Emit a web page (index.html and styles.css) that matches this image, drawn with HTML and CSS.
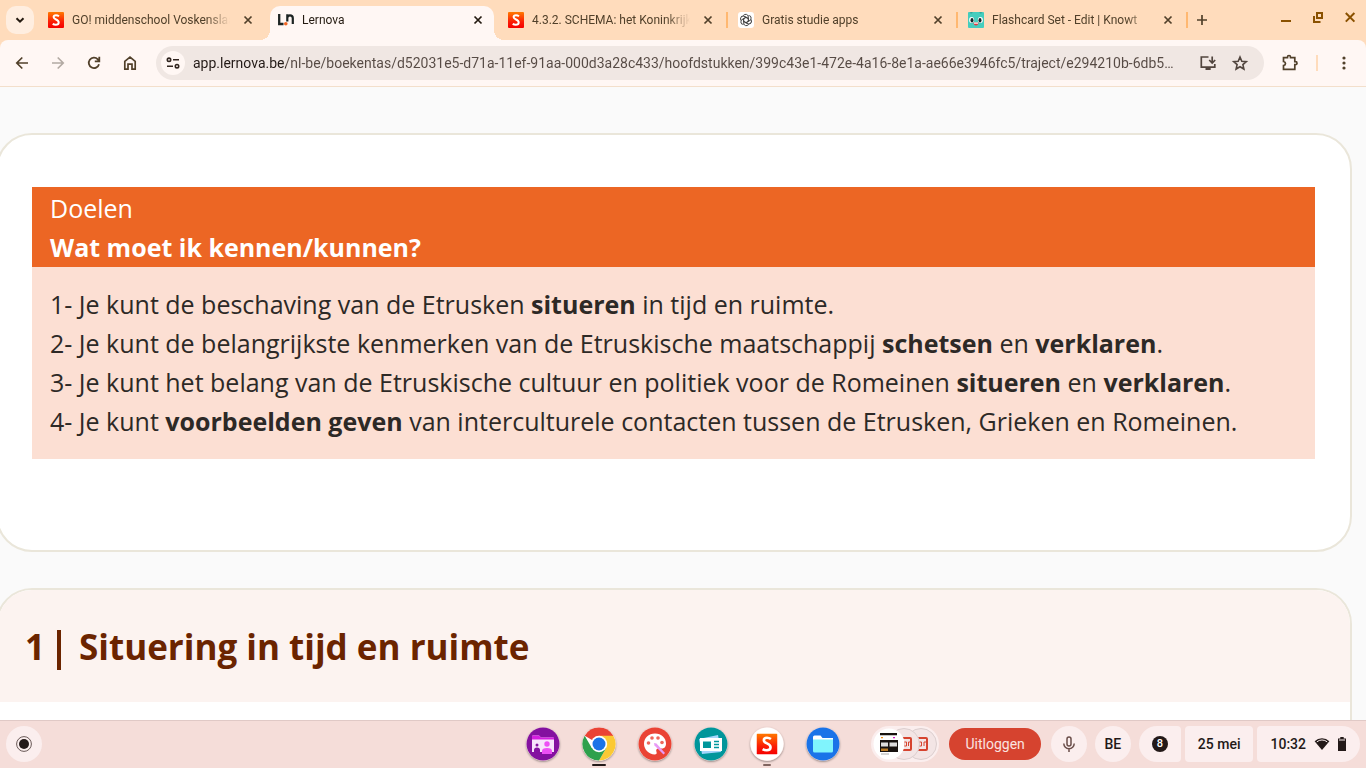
FILE: index.html
```html
<!DOCTYPE html>
<html lang="nl-BE">
<head>
  <meta charset="UTF-8">
  <title>Lernova</title>
  <meta name="viewport" content="width=device-width, initial-scale=1.0">
  <link rel="stylesheet" href="styles.css">
</head>
<body>
  <header class="browser">
    <!-- tabs -->
    <div class="tab-strip">
      <button class="tab-search" aria-label="Tabbladen zoeken">
        <svg width="16" height="16" viewBox="0 0 16 16"><path d="M4.5 6.2 8 9.7l3.5-3.5" fill="none" stroke="#241a10" stroke-width="2"/></svg>
      </button>
      <nav class="tabs">
        <div class="tab">
          <svg class="favicon" viewBox="0 0 16 16"><use href="#smartschool"/></svg>
          <a href="#" class="tab-title">GO! middenschool Voskenslaan</a>
          <button class="tab-close" aria-label="Sluiten"><svg viewBox="0 0 16 16"><use href="#cross"/></svg></button>
        </div>
        <div class="tab active">
          <svg class="favicon" viewBox="0 0 16 16"><path d="M1.2 2v10h4.300" fill="none" stroke="#1d2423" stroke-width="2.300"/><path d="M9.300 9.500V2.200M9.300 7V6q0-2.600 2.700-2.600T14.800 6v6" fill="none" stroke="#1d2423" stroke-width="2.200"/><circle cx="7.800" cy="11.800" r="1.800" fill="#f26522"/></svg>
          <a href="#" class="tab-title">Lernova</a>
          <button class="tab-close" aria-label="Sluiten"><svg viewBox="0 0 16 16"><use href="#cross"/></svg></button>
        </div>
        <div class="tab separated">
          <svg class="favicon" viewBox="0 0 16 16"><use href="#smartschool"/></svg>
          <a href="#" class="tab-title">4.3.2. SCHEMA: het Koninkrijk</a>
          <button class="tab-close" aria-label="Sluiten"><svg viewBox="0 0 16 16"><use href="#cross"/></svg></button>
        </div>
        <div class="tab separated">
          <svg class="favicon" viewBox="0 0 16 16">
            <rect width="16" height="16" rx="3" fill="#fff"/>
            <g fill="none" stroke="#444" stroke-width="1">
              <path id="petal" d="M8 5.300 5.600 6.700v4.100q0 2 1.900 2.800 2 .5 3.300-1.200"/>
              <use href="#petal" transform="rotate(60 8 8)"/>
              <use href="#petal" transform="rotate(120 8 8)"/>
              <use href="#petal" transform="rotate(180 8 8)"/>
              <use href="#petal" transform="rotate(240 8 8)"/>
              <use href="#petal" transform="rotate(300 8 8)"/>
            </g>
          </svg>
          <a href="#" class="tab-title">Gratis studie apps</a>
          <button class="tab-close" aria-label="Sluiten"><svg viewBox="0 0 16 16"><use href="#cross"/></svg></button>
        </div>
        <div class="tab separated">
          <svg class="favicon" viewBox="0 0 16 16">
            <rect width="16" height="16" rx="1" fill="#45cdbd"/>
            <path d="M2 0h3L3 2zM11 0h3l-1 2z" fill="#2fa99b"/>
            <ellipse cx="3.600" cy="8" rx="2.500" ry="3" fill="#fff"/><ellipse cx="12.400" cy="8" rx="2.500" ry="3" fill="#fff"/>
            <ellipse cx="4" cy="8.200" rx="1.500" ry="2.200" fill="#14292b"/><ellipse cx="12" cy="8.200" rx="1.500" ry="2.200" fill="#14292b"/>
            <path d="M5.500 10.500h5q-.3 3-2.500 3t-2.500-3z" fill="#e5373d"/><path d="M6 10.500h4v1.200H6z" fill="#fff"/>
          </svg>
          <a href="#" class="tab-title">Flashcard Set - Edit | Knowt</a>
          <button class="tab-close" aria-label="Sluiten"><svg viewBox="0 0 16 16"><use href="#cross"/></svg></button>
        </div>
      </nav>
      <button class="new-tab" aria-label="Nieuw tabblad">
        <svg width="16" height="16" viewBox="0 0 16 16"><path d="M8 3v10M3 8h10" stroke="#51402a" stroke-width="1.700"/></svg>
      </button>
      <div class="window-controls">
        <button aria-label="Minimaliseren"><svg viewBox="0 0 16 16"><path d="M3 11h10" stroke="#8a5100" stroke-width="2"/></svg></button>
        <button aria-label="Herstellen"><svg viewBox="0 0 16 16"><path d="M7 3h5v5H7zM4 6v6h6.500" fill="none" stroke="#8a5100" stroke-width="2"/></svg></button>
        <button aria-label="Venster sluiten"><svg viewBox="0 0 16 16"><path d="m3.800 3 8.600 8.600m0-8.600-8.600 8.600" stroke="#8a5100" stroke-width="2"/></svg></button>
      </div>
    </div>

    <!-- address bar -->
    <div class="toolbar">
      <button class="tool" aria-label="Vorige"><svg viewBox="0 0 20 20"><path d="M16 10H5m5.300-5.500L4.800 10l5.500 5.500" fill="none" stroke="#51402a" stroke-width="1.700"/></svg></button>
      <button class="tool" aria-label="Volgende" disabled><svg viewBox="0 0 20 20"><path d="M4 10h11M9.700 4.500l5.500 5.500-5.500 5.500" fill="none" stroke="#b3aaa3" stroke-width="1.700"/></svg></button>
      <button class="tool" aria-label="Vernieuwen"><svg viewBox="0 0 20 20"><path d="M15 11.200A5.200 5.200 0 1 1 13.800 6.300L15 7.600M15.300 3.800v4.500h-4.500" fill="none" stroke="#51402a" stroke-width="1.800"/></svg></button>
      <button class="tool" aria-label="Startpagina"><svg viewBox="0 0 20 20"><path d="M4.800 16.200V8.300L10 4.200l5.200 4.100v7.900H12v-5H8v5z" fill="none" stroke="#51402a" stroke-width="1.700"/></svg></button>
      <div class="address">
        <button class="site-info" aria-label="Sitegegevens">
          <svg width="16" height="16" viewBox="0 0 16 16"><g fill="none" stroke="#30251f" stroke-width="1.600"><circle cx="4" cy="4.800" r="1.700"/><path d="M8 4.800h6M2 11.200h6"/><circle cx="12" cy="11.200" r="1.700"/></g></svg>
        </button>
        <input class="url" type="text" aria-label="Adresbalk" value="app.lernova.be/nl-be/boekentas/d52031e5-d71a-11ef-91aa-000d3a28c433/hoofdstukken/399c43e1-472e-4a16-8e1a-ae66e3946fc5/traject/e294210b-6db5…">
        <button class="tool small" aria-label="App installeren"><svg viewBox="0 0 20 20"><path d="M10.500 4H3.300v10.200h13.500V11" fill="none" stroke="#51453e" stroke-width="1.700"/><path d="M7.500 14.500h5.200v2.500H7.500z" fill="#51453e"/><path d="M14.200 3.500v6m-3-2.500 3 3 3-3" fill="none" stroke="#51453e" stroke-width="1.700"/></svg></button>
        <button class="tool small" aria-label="Bladwijzer"><svg viewBox="0 0 20 20"><path d="m10 4 1.800 4.200 4.500.4-3.400 3 1 4.400-3.900-2.300L6.100 16l1-4.400-3.400-3 4.500-.4z" fill="none" stroke="#51453e" stroke-width="1.600"/></svg></button>
      </div>
      <button class="tool extensions" aria-label="Extensies"><svg viewBox="0 0 20 20"><path d="M3.500 4.700h4V4a1.500 1.500 0 0 1 3 0v.7h4.300v4h.7a1.500 1.500 0 0 1 0 3h-.7v4.600H3.500v-3.800q2-.3 2-2t-2-2z" fill="none" stroke="#51402a" stroke-width="1.700"/></svg></button>
      <span class="divider"></span>
      <button class="tool menu" aria-label="Menu"><svg viewBox="0 0 20 20"><g fill="#51402a"><circle cx="10" cy="5" r="1.600"/><circle cx="10" cy="10" r="1.600"/><circle cx="10" cy="15" r="1.600"/></g></svg></button>
    </div>
  </header>

  <!-- page -->
  <main class="page">
    <section class="card goals-card">
      <div class="goals">
        <div class="goals-header">
          <p>Doelen</p>
          <h2>Wat moet ik kennen/kunnen?</h2>
        </div>
        <div class="goals-list">
          <p>1- Je kunt de beschaving van de Etrusken <b>situeren</b> in tijd en ruimte.</p>
          <p>2- Je kunt de belangrijkste kenmerken van de Etruskische maatschappij <b>schetsen</b> en <b>verklaren</b>.</p>
          <p>3- Je kunt het belang van de Etruskische cultuur en politiek voor de Romeinen <b>situeren</b> en <b>verklaren</b>.</p>
          <p>4- Je kunt <b>voorbeelden geven</b> van interculturele contacten tussen de Etrusken, Grieken en Romeinen.</p>
        </div>
      </div>
    </section>
    <section class="card chapter">
      <h1><span>1</span><span class="bar"></span><span>Situering in tijd en ruimte</span></h1>
    </section>
  </main>

  <!-- shelf -->
  <footer class="shelf">
    <div class="shelf-start">
      <button class="round" aria-label="Launcher"><svg width="18" height="18" viewBox="0 0 18 18"><circle cx="9" cy="9" r="7.400" fill="none" stroke="#6a5a58" stroke-width="1"/><circle cx="9" cy="9" r="5" fill="#231918"/></svg></button>
    </div>
    <nav class="apps">
      <button class="app" aria-label="Scherm delen">
        <svg viewBox="0 0 34 34"><circle cx="17" cy="17" r="16.500" fill="#8411a0"/><path d="M6 9.500q0-1 1-1h6l2 2h12q1 0 1 1V25H6z" fill="#f7e3fb"/><path d="M6 9.500q0-1 1-1h6l2 2H28v2H6z" fill="#d51fe0"/><circle cx="11" cy="18" r="1.500" fill="#8411a0"/><path d="M8 25v-2q0-2.500 3-2.500t3 2.500v2z" fill="#8411a0"/><circle cx="21" cy="17" r="2.700" fill="#ed50f5"/><path d="M16 27v-3q0-3 5-3t5 3v3z" fill="#ed50f5"/></svg>
      </button>
      <button class="app" aria-label="Chrome">
        <svg viewBox="0 0 34 34"><circle cx="17" cy="17" r="16.500" fill="#fff"/><path d="M17 17 2.700 8.700A16.500 16.500 0 0 1 31.300 8.700z" fill="#ea4335"/><path d="M17 8.700h14.300A16.500 16.500 0 0 1 17 33.500l7.200-12.400z" fill="#fbc934"/><path d="M9.800 21.100 2.700 8.700A16.500 16.500 0 0 0 17 33.500l7.200-12.400z" fill="#2da04c"/><circle cx="17" cy="17" r="8.200" fill="#fff"/><circle cx="17" cy="17" r="6.500" fill="#1a73e8"/></svg>
      </button>
      <button class="app" aria-label="Canvas">
        <svg viewBox="0 0 34 34"><circle cx="17" cy="17" r="16.500" fill="#ea4335"/><path d="M17 6.500c-6.500 0-11 4.500-11 10.300S11 27.500 16.500 27.500c2 0 2.600-1.200 2-2.500-.8-2 0-3.500 2-3.500H24c2.800 0 4-2.200 4-5 0-5.500-4.500-10-11-10z" fill="#fff"/><g fill="#ee675c"><circle cx="10.500" cy="16" r="1.800"/><circle cx="14" cy="11" r="1.800"/><circle cx="20" cy="11" r="1.800"/><circle cx="24" cy="15.500" r="1.800"/></g><path d="m16 16 2.500.5L27 26l-1.500 1.500-9-9z" fill="#e79af5"/></svg>
      </button>
      <button class="app" aria-label="Nieuws">
        <svg viewBox="0 0 34 34"><circle cx="17" cy="17" r="16.500" fill="#00969b"/><path d="m5 12 19-4 3 17-19 2z" fill="#a4d5fb"/><path d="M6 11h22v13H6z" fill="#fff"/><path d="M9 14.500h8v6.500H9z" fill="#00969b"/><path d="M20 14.500h5M20 17.500h5M20 20.500h5" stroke="#00969b" stroke-width="1.600"/></svg>
      </button>
      <button class="app" aria-label="Smartschool">
        <svg viewBox="0 0 34 34"><circle cx="17" cy="17" r="16.500" fill="#fff"/><use href="#smartschool" x="6.500" y="6.500" width="21" height="21"/></svg>
      </button>
      <button class="app" aria-label="Bestanden">
        <svg viewBox="0 0 34 34"><circle cx="17" cy="17" r="16.500" fill="#1a73e8"/><path d="M7 10q0-1.500 1.500-1.500h6l2 2.500H27v5H7z" fill="#fff"/><path d="M7 12.500h20V24q0 1.500-1.500 1.500h-17Q7 25.500 7 24z" fill="#80f4fd"/></svg>
      </button>
    </nav>
    <div class="shelf-end">
      <button class="holding" aria-label="Tote">
        <svg width="68" height="36" viewBox="0 0 68 36">
          <circle cx="50" cy="18" r="15.500" fill="#f3e5e5" stroke="#dccfcf"/>
          <rect x="46" y="12" width="10" height="12" rx="1" fill="none" stroke="#d6432f" stroke-width="2"/><path d="M48 16h2.500v4H48zm5 4v-4h2" fill="none" stroke="#d6432f" stroke-width="1"/>
          <circle cx="33" cy="18" r="15.500" fill="#f3e5e5" stroke="#dccfcf"/>
          <rect x="30" y="12" width="10" height="12" rx="1" fill="none" stroke="#d6432f" stroke-width="2"/><path d="M33 16h2.500v4H33zm4.500 4v-4h2" fill="none" stroke="#d6432f" stroke-width="1"/>
          <circle cx="18" cy="18" r="15.500" fill="#fff"/>
          <path d="M9 7h17v2.200H9zM9 14h18v12H9z" fill="#17120f"/><path d="M10 16.500h7v4h-7zm8.500 0h7.500v4h-7.500z" fill="#ddd"/><path d="M10 22.500h7v2.500h-7z" fill="#b97a24"/><path d="M10 11h2v1.200h-2z" fill="#f3941c"/><path d="M22 11h2v1.200h-2z" fill="#d718c8"/><path d="M10 28h8" stroke="#aaa"/>
        </svg>
      </button>
      <button class="logout">Uitloggen</button>
      <button class="round" aria-label="Dicteren"><svg width="20" height="20" viewBox="0 0 20 20"><path d="M10 3a2 2 0 0 1 2 2v5a2 2 0 0 1-4 0V5a2 2 0 0 1 2-2zM4.800 9.500a5.200 5.200 0 0 0 10.400 0M10 15v3" fill="none" stroke="#6a4d49" stroke-width="1.500"/></svg></button>
      <button class="round">BE</button>
      <div class="status">
        <button class="notifications"><span class="count">8</span></button>
        <button class="date">25 mei</button>
        <button class="clock">
          10:32
          <svg width="16" height="16" viewBox="0 0 16 16"><path d="M.6 5.300a10.500 10.500 0 0 1 14.800 0L8 14z" fill="#231918"/><path d="M2.800 5.900a8 8 0 0 1 10.400 0" fill="none" stroke="#fbeeee" stroke-width="1"/></svg>
          <svg width="8" height="16" viewBox="0 0 8 16"><path d="M2.300 1h3.400v1.500H8V15H0V2.500h2.300z" fill="#231918"/><path d="M1 3.500h6v1H1z" fill="#fbeeee"/></svg>
        </button>
      </div>
    </div>
  </footer>

  <!-- shared icons -->
  <svg class="defs" aria-hidden="true">
    <linearGradient id="ember" x1="0" y1="0" x2="0" y2="1"><stop offset="0" stop-color="#ff7a00"/><stop offset=".6" stop-color="#fb1e05"/><stop offset="1" stop-color="#f50000"/></linearGradient>
    <symbol id="smartschool" viewBox="0 0 16 16"><rect width="16" height="16" rx="1" fill="url(#ember)"/><path d="M11 4.200Q9.600 3.200 8 3.200 5.600 3.200 5.600 5.100 5.600 6.500 8 7.500 10.700 8.600 10.700 10.500 10.700 12.800 7.800 12.800 6 12.800 4.700 11.900" fill="none" stroke="#fff" stroke-width="2"/></symbol>
    <symbol id="cross" viewBox="0 0 16 16"><path d="m4.500 4.500 7 7m0-7-7 7" stroke="currentColor" stroke-width="1.700"/></symbol>
  </svg>
</body>
</html>
```
FILE: styles.css
```css
* {
  box-sizing: border-box;
}

body {
  display: flex;
  flex-direction: column;
  height: 100vh;
  margin: 0;
  overflow: hidden;
  background: #fafafa;
  font-family: Roboto, sans-serif;
}

button {
  display: flex;
  align-items: center;
  justify-content: center;
  padding: 0;
  border: none;
  background: none;
  font: inherit;
  color: inherit;
}

svg {
  display: block;
  flex: none;
}

h1, h2, p {
  margin: 0;
}

.defs {
  position: absolute;
  width: 0;
  height: 0;
}

/* tab strip */
.browser {
  background: #ffdcbc;
}

.tab-strip {
  display: flex;
  height: 40px;
  padding-left: 6px;
}

.tab-search {
  width: 28px;
  height: 28px;
  margin: 6px 4px 0 0;
  border-radius: 10px;
  background: #ffeee0;
}

.tabs {
  display: flex;
  flex: 1 1 0;
  max-width: 1150px;
}

.tab {
  position: relative;
  display: flex;
  flex: 1 1 0;
  align-items: center;
  min-width: 0;
  padding: 0 12px 0 10px;
  color: #51402a;
  font-size: 12px;
}

.separated::after {
  content: "";
  position: absolute;
  top: 12px;
  right: 0;
  width: 2px;
  height: 16px;
  background: #ffb871;
}

.active {
  margin: 6px 4px 0 2px;
  padding: 0 8px 6px;
  border-radius: 10px 10px 0 0;
  background: #fff7f4;
  color: #231a10;
}

.active::before,
.active::after {
  content: "";
  position: absolute;
  bottom: 0;
  width: 10px;
  height: 10px;
}

.active::before {
  right: 100%;
  background: radial-gradient(circle at 0 0, transparent 10px, #fff7f4 10px);
}

.active::after {
  left: 100%;
  background: radial-gradient(circle at 100% 0, transparent 10px, #fff7f4 10px);
}

.favicon {
  width: 16px;
  height: 16px;
}

.tab-title {
  flex: 1;
  margin: 0 10px 0 8px;
  overflow: hidden;
  color: inherit;
  line-height: 16px;
  text-decoration: none;
  white-space: nowrap;
  -webkit-mask-image: linear-gradient(to left, transparent, #000 24px);
  mask-image: linear-gradient(to left, transparent, #000 24px);
}

.tab-close,
.tab-close svg {
  width: 16px;
  height: 16px;
}

.new-tab {
  width: 28px;
}

.window-controls {
  display: flex;
  gap: 16px;
  margin-left: auto;
  padding: 0 8px 4px 0;
}

.window-controls svg {
  width: 16px;
  height: 16px;
}

/* toolbar */
.toolbar {
  display: flex;
  align-items: center;
  height: 47px;
  padding: 0 8px;
  border-bottom: 1px solid #f3dfcb;
  border-radius: 8px 8px 0 0;
  background: #fff7f4;
}

.tool {
  flex: none;
  width: 28px;
  height: 28px;
  margin-right: 8px;
}

.tool svg {
  width: 20px;
  height: 20px;
}

.address {
  display: flex;
  flex: 1;
  align-items: center;
  height: 34px;
  margin: 0 12px 0 4px;
  padding: 0 10px 0 5px;
  border-radius: 17px;
  background: #f0e7e3;
}

.site-info {
  flex: none;
  width: 24px;
  height: 24px;
  border-radius: 50%;
  background: #fff7f4;
}

/* host part is darker than the path */
.url {
  flex: 1;
  min-width: 0;
  height: 24px;
  margin: 0 0 0 8px;
  padding: 0;
  border: none;
  outline: none;
  background: linear-gradient(to right, #231a16 93px, #564a44 93px);
  -webkit-background-clip: text;
  background-clip: text;
  color: transparent;
  font: 14px Roboto, sans-serif;
  text-overflow: ellipsis;
}

.small {
  margin: 0 0 0 4px;
}

.extensions {
  margin-right: 12px;
}

.divider {
  width: 2px;
  height: 16px;
  margin-right: 12px;
  background: #ffdcbc;
}

.menu {
  margin-right: 0;
}

/* page */
.page {
  flex: 1;
  min-height: 0;
  padding: 46px 14px 0 0;
  overflow: hidden;
  font-family: "Open Sans", "Noto Sans", sans-serif;
}

.card {
  margin: 0 0 36px -4px;
  border: 2px solid #eae6da;
  border-radius: 36px;
  background: #fff;
}

.goals-card {
  padding: 52px 35px 91px 34px;
}

.goals {
  background: #fcdfd3;
  font-size: 25px;
}

.goals-header {
  padding: 2px 18px 0;
  background: #ec6624;
  color: #fff;
  line-height: 39px;
}

.goals-header h2 {
  font-size: 25px;
}

.goals-list {
  padding: 18px;
  color: #2d2926;
  line-height: 39px;
  white-space: nowrap;
}

.chapter {
  height: 400px;
  overflow: hidden;
}

.chapter h1 {
  display: flex;
  align-items: center;
  height: 112px;
  padding: 0 27px;
  background: #fcf3f0;
  color: #6b2400;
  font-size: 35px;
}

.bar {
  width: 4px;
  height: 40px;
  margin: 8px 18px 0 12px;
  background: #6b2400;
}

/* shelf */
.shelf {
  display: grid;
  grid-template-columns: 1fr auto 1fr;
  align-items: center;
  height: 48px;
  padding: 0 6px;
  background: #f5ddd9;
  box-shadow: inset 0 1px #e0c9c6;
  color: #231918;
  font-size: 14px;
  font-weight: 500;
}

.apps {
  display: flex;
  gap: 22px;
}

.app {
  position: relative;
  width: 34px;
  height: 34px;
  border-radius: 50%;
  box-shadow: 0 1px 2px rgba(0, 0, 0, 0.35);
}

.app svg {
  width: 34px;
  height: 34px;
}

/* running apps */
.app:nth-child(2)::after,
.app:nth-child(5)::after {
  content: "";
  position: absolute;
  top: 37px;
  width: 14px;
  height: 2px;
  border-radius: 1px;
  background: #231918;
}

.app:nth-child(5)::after {
  width: 8px;
  background: #806560;
}

.shelf-end {
  display: flex;
  align-items: center;
  justify-content: flex-end;
  gap: 8px;
}

.round {
  width: 36px;
  height: 36px;
  border-radius: 50%;
  background: #fbeeee;
}

.holding {
  height: 36px;
  border-radius: 18px;
  background: #fbeeee;
}

.logout {
  height: 32px;
  margin: 0 2px;
  padding: 0 16px;
  border-radius: 16px;
  background: #d6432f;
  color: #fbe4e0;
  font-weight: 400;
}

.status {
  display: flex;
  gap: 4px;
}

.status button {
  height: 36px;
  border-radius: 4px;
  background: #fbeeee;
}

.status .notifications {
  width: 42px;
  border-radius: 18px 4px 4px 18px;
}

.count {
  width: 16px;
  height: 16px;
  border-radius: 50%;
  background: #231918;
  color: #fff;
  font-size: 11px;
  line-height: 16px;
}

.status .date {
  padding: 0 13px;
}

.status .clock {
  gap: 8px;
  padding: 0 14px 0 13px;
  border-radius: 4px 18px 18px 4px;
}
```
